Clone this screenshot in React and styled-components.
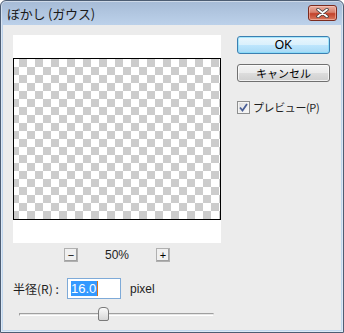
import React from 'react';
import styled, { createGlobalStyle } from 'styled-components';

const GlobalStyle = createGlobalStyle`
  html, body {
    margin: 0;
    padding: 0;
    background: #ffffff;
  }
  body {
    font-family: "Liberation Sans", "Noto Sans CJK JP", sans-serif;
    color: #1e1e1e;
  }
`;

const JP = `"Noto Sans CJK JP", "Liberation Sans", sans-serif`;

const Window = styled.div`
  width: 344px;
  height: 333px;
  box-sizing: border-box;
  display: flex;
  flex-direction: column;
  border: 1px solid #4d5d73;
  border-radius: 6px 6px 0 0;
  background: linear-gradient(to bottom, #a6bbd6 0px, #bcd1ea 24px, #c2d8ef 100%);
  box-shadow: inset 0 0 0 1px rgba(255, 255, 255, 0.45);
  padding: 0 2px 2px;
  overflow: hidden;
`;

const TitleBar = styled.div`
  height: 24px;
  display: flex;
  align-items: center;
  justify-content: space-between;
  padding: 0 4px 0 4px;
`;

const Title = styled.span`
  font-family: ${JP};
  font-size: 13px;
  color: #1a1a1a;
  letter-spacing: -0.2px;
`;

const CloseButton = styled.div`
  width: 29px;
  height: 16px;
  box-sizing: border-box;
  border: 1px solid #7b2b1f;
  border-radius: 3px;
  background: linear-gradient(to bottom, #eab0a2 0%, #d8806c 45%, #c2412a 55%, #d97a5f 100%);
  box-shadow: inset 0 0 0 1px rgba(255, 210, 200, 0.5);
  display: flex;
  align-items: center;
  justify-content: center;
`;

const Client = styled.div`
  flex: 1;
  background: #ececec;
  display: flex;
  padding: 10px 11px 0 10px;
`;

const LeftCol = styled.div`
  width: 208px;
  display: flex;
  flex-direction: column;
`;

const Preview = styled.div`
  width: 208px;
  height: 208px;
  box-sizing: border-box;
  padding: 23px 0;
  background: #ffffff;
`;

const Checker = styled.div`
  height: 162px;
  box-sizing: border-box;
  border: 1px solid #000000;
  background-color: #ffffff;
  background-image: conic-gradient(#cccccc 25%, #ffffff 0 50%, #cccccc 0 75%, #ffffff 0);
  background-size: 16px 16px;
  background-position: -3px 0;
`;

const ZoomRow = styled.div`
  margin-top: 5px;
  height: 14px;
  display: flex;
  justify-content: center;
  align-items: center;
`;

const StepButton = styled.div`
  width: 14px;
  height: 14px;
  box-sizing: border-box;
  background: #f0f0f0;
  border: 1px solid;
  border-color: #ffffff #3c3c3c #3c3c3c #ffffff;
  box-shadow: inset -1px -1px 0 #a0a0a0, 0 0 0 0 transparent;
  outline: 1px solid #b0b0b0;
  outline-offset: -1px;
  display: flex;
  align-items: center;
  justify-content: center;
  font-size: 11px;
  line-height: 1;
  color: #000;
`;

const ZoomLabel = styled.span`
  width: 78px;
  text-align: center;
  font-size: 12px;
`;

const RadiusRow = styled.div`
  margin-top: 16px;
  height: 21px;
  display: flex;
  align-items: center;
`;

const FieldLabel = styled.span`
  width: 54px;
  font-family: ${JP};
  font-size: 12px;
  white-space: nowrap;
`;

const Input = styled.div`
  width: 54px;
  height: 21px;
  box-sizing: border-box;
  border: 1px solid #7eaad8;
  background: #ffffff;
  padding-left: 3px;
  display: flex;
  align-items: center;
`;

const Selected = styled.span`
  background: #3399ff;
  color: #ffffff;
  font-size: 13px;
  line-height: 15px;
  padding: 0 1px 0 0;
`;

const Caret = styled.span`
  width: 1px;
  height: 15px;
  background: #d8731c;
`;

const Unit = styled.span`
  margin-left: 9px;
  font-size: 12px;
`;

const SliderRow = styled.div`
  margin-top: 8px;
  height: 14px;
  position: relative;
`;

const Track = styled.div`
  position: relative;
  top: 6px;
  margin-left: 6px;
  width: 195px;
  height: 3px;
  box-sizing: border-box;
  border: 1px solid;
  border-color: #a0a0a0 #e0e0e0 #ffffff #a0a0a0;
  background: #e6e6e6;
`;

const Thumb = styled.div`
  position: absolute;
  left: 85px;
  top: 0;
  width: 11px;
  height: 14px;
  box-sizing: border-box;
  border: 1px solid #7a7a7a;
  border-radius: 4px 4px 2px 2px;
  background: linear-gradient(to bottom, #fafafa, #d6d6d6);
`;

const RightCol = styled.div`
  margin-left: 16px;
  width: 93px;
  display: flex;
  flex-direction: column;
  padding-top: 1px;
`;

const DialogButton = styled.div`
  height: 18px;
  box-sizing: border-box;
  margin-top: ${(p) => (p.$primary ? 0 : 10)}px;
  border: 1px solid ${(p) => (p.$primary ? '#3c7fb1' : '#707070')};
  border-radius: 3px;
  background: ${(p) =>
    p.$primary
      ? 'linear-gradient(to bottom, #eaf6fd 0%, #d9f0fc 50%, #bee6fd 50%, #a7d9f5 100%)'
      : 'linear-gradient(to bottom, #f2f2f2 0%, #ebebeb 50%, #dddddd 50%, #cfcfcf 100%)'};
  box-shadow: inset 0 0 0 1px ${(p) => (p.$primary ? 'rgba(120, 220, 250, 0.6)' : 'rgba(255, 255, 255, 0.7)')};
  display: flex;
  align-items: center;
  justify-content: center;
  font-family: ${(p) => (p.$jp ? JP : `"Liberation Sans", sans-serif`)};
  font-size: ${(p) => (p.$jp ? 11 : 12)}px;
  color: #000;
`;

const CheckRow = styled.label`
  margin-top: 17px;
  display: flex;
  align-items: center;
  gap: 3px;
  font-family: ${JP};
  font-size: 11px;
  letter-spacing: -0.4px;
`;

const CheckBox = styled.span`
  width: 13px;
  height: 13px;
  box-sizing: border-box;
  border: 1px solid #8e8f8f;
  background: linear-gradient(135deg, #dcdcdc, #fbfbfb);
  box-shadow: inset 0 0 0 1px #f4f4f4;
  display: flex;
  align-items: center;
  justify-content: center;
`;

const App = () => (
  <>
    <GlobalStyle />
    <Window>
      <TitleBar>
        <Title>ぼかし (ガウス)</Title>
        <CloseButton>
          <svg width="13" height="10" viewBox="0 0 13 10">
            <path d="M2 1.5 L11 8.5 M11 1.5 L2 8.5" stroke="#3a3a3a" strokeWidth="3.4" strokeLinecap="round" />
            <path d="M2 1.5 L11 8.5 M11 1.5 L2 8.5" stroke="#ffffff" strokeWidth="1.8" strokeLinecap="round" />
          </svg>
        </CloseButton>
      </TitleBar>
      <Client>
        <LeftCol>
          <Preview>
            <Checker />
          </Preview>
          <ZoomRow>
            <StepButton>−</StepButton>
            <ZoomLabel>50%</ZoomLabel>
            <StepButton>+</StepButton>
          </ZoomRow>
          <RadiusRow>
            <FieldLabel>半径(R) :</FieldLabel>
            <Input>
              <Selected>16.0</Selected>
              <Caret />
            </Input>
            <Unit>pixel</Unit>
          </RadiusRow>
          <SliderRow>
            <Track />
            <Thumb />
          </SliderRow>
        </LeftCol>
        <RightCol>
          <DialogButton $primary>OK</DialogButton>
          <DialogButton $jp>キャンセル</DialogButton>
          <CheckRow>
            <CheckBox>
              <svg width="9" height="9" viewBox="0 0 9 9">
                <path d="M1 4.5 L3.5 7.5 L8 1" fill="none" stroke="#4a5f97" strokeWidth="1.8" />
              </svg>
            </CheckBox>
            プレビュー(P)
          </CheckRow>
        </RightCol>
      </Client>
    </Window>
  </>
);

export { App as default };
